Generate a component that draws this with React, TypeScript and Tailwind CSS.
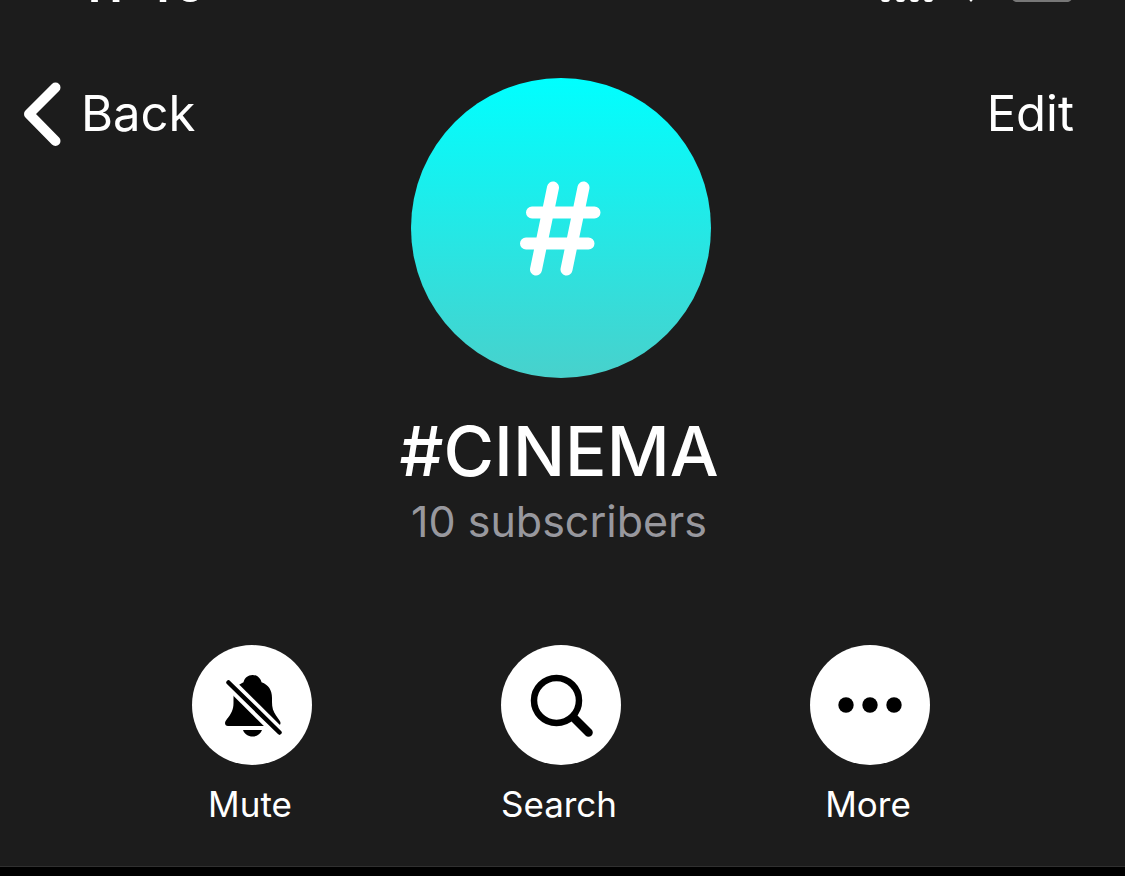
import * as React from "react"

const actions = [
  { label: "Mute", icon: <MuteIcon /> },
  { label: "Search", icon: <SearchIcon /> },
  { label: "More", icon: <MoreIcon /> },
]

function MuteIcon() {
  return (
    <svg viewBox="0 0 120 120" className="h-full w-full" aria-hidden="true">
      <path
        d="M60.500 30C56 30 52.500 33 51.500 37.300C45 40 41.500 45.500 41.500 53V58C41.500 65 39 69 35 74C32 77.500 32.500 81 36 81H85C88.500 81 89.500 78 87.500 75.500L84 70.500C81 66 80 62.500 80 57V53C80 45 76.500 40 69.500 37.300C68.500 33 65 30 60.500 30Z"
        fill="black"
      />
      <path d="M51 85H70C68.500 89 65 91.500 60.500 91.500S52.500 89 51 85Z" fill="black" />
      <path d="M30 31L94 94.500" stroke="white" strokeWidth="12" />
      <path d="M36.500 37.500L87.500 87.500" stroke="black" strokeWidth="4.500" strokeLinecap="round" />
    </svg>
  )
}

function SearchIcon() {
  return (
    <svg viewBox="0 0 120 120" className="h-full w-full" fill="none" stroke="black" aria-hidden="true">
      <circle cx="55.500" cy="55.500" r="22.500" strokeWidth="6.500" />
      <path d="M73 73L87.500 87.500" strokeWidth="8.500" strokeLinecap="round" />
    </svg>
  )
}

function MoreIcon() {
  return (
    <svg viewBox="0 0 120 120" className="h-full w-full" aria-hidden="true">
      <circle cx="36" cy="60" r="7.700" />
      <circle cx="60" cy="60" r="7.700" />
      <circle cx="84" cy="60" r="7.700" />
    </svg>
  )
}

// Only the lower edge of the status bar stays on screen
const StatusBar = () => (
  <div className="flex h-0.5 items-end justify-between overflow-hidden pl-20 pr-[50px]">
    <span className="text-[51px] font-semibold leading-[37px]">11:40</span>
    <svg viewBox="0 0 194 32" className="h-8 w-[194px] shrink-0" aria-hidden="true">
      <g fill="white">
        <rect x="0" y="22" width="9" height="10" rx="3" />
        <rect x="15" y="16" width="9" height="16" rx="3" />
        <rect x="29" y="9" width="9" height="23" rx="3" />
        <rect x="43" y="2" width="9" height="30" rx="3" />
        <path d="M90 32L82 23Q90 17 98 23Z" />
      </g>
      <rect x="130" y="2" width="62" height="29" rx="8" fill="none" stroke="#777777" strokeWidth="3" />
    </svg>
  </div>
)

const App = () => {
  return (
    <div className="min-h-screen bg-black font-['Inter',sans-serif] text-white">
      <header className="border-b border-[#303030] bg-[#1c1c1c]">
        <StatusBar />

        <div className="pr-[3px]">
          <div className="grid grid-cols-[1fr_auto_1fr] items-start pt-19">
            <button className="mt-1 flex h-16 items-center gap-5 justify-self-start pl-6 text-[49px]">
              <svg viewBox="0 0 37 64" className="h-16 w-[37px]" fill="none" aria-hidden="true">
                <path
                  d="M31.500 5.500L5 32L31.500 59"
                  stroke="white"
                  strokeWidth="10"
                  strokeLinecap="round"
                  strokeLinejoin="round"
                />
              </svg>
              Back
            </button>

            <div className="h-[300px] w-[300px] rounded-full bg-linear-to-b/srgb from-[#00ffff] to-[#48d1cc]">
              <svg viewBox="0 0 300 300" className="h-full w-full" role="img" aria-label="Channel">
                <path
                  d="M142 109.500L125 191.500M172.500 109.500L155.500 191.500M121 134.500H183.500M115 165.500H177.500"
                  fill="none"
                  stroke="white"
                  strokeWidth="12"
                  strokeLinecap="round"
                />
              </svg>
            </div>

            <button className="mt-1 flex h-16 items-center justify-self-end pr-12 text-[49px]">Edit</button>
          </div>

          <div className="mt-9 pr-1 text-center">
            <h1 className="text-[69px] font-medium leading-[74px]">#CINEMA</h1>
            <p className="mt-2 text-[43px] leading-[50px] text-[#98989e]">10 subscribers</p>
          </div>

          <div className="mt-[99px] flex justify-between px-48 pb-[42px]">
            {actions.map((action) => (
              <button key={action.label} className="flex w-[120px] flex-col items-center">
                <span className="h-[120px] w-[120px] rounded-full bg-white">{action.icon}</span>
                <span className="mt-5 pr-1 text-[35px] leading-[39px]">{action.label}</span>
              </button>
            ))}
          </div>
        </div>
      </header>
    </div>
  )
}

export default App
